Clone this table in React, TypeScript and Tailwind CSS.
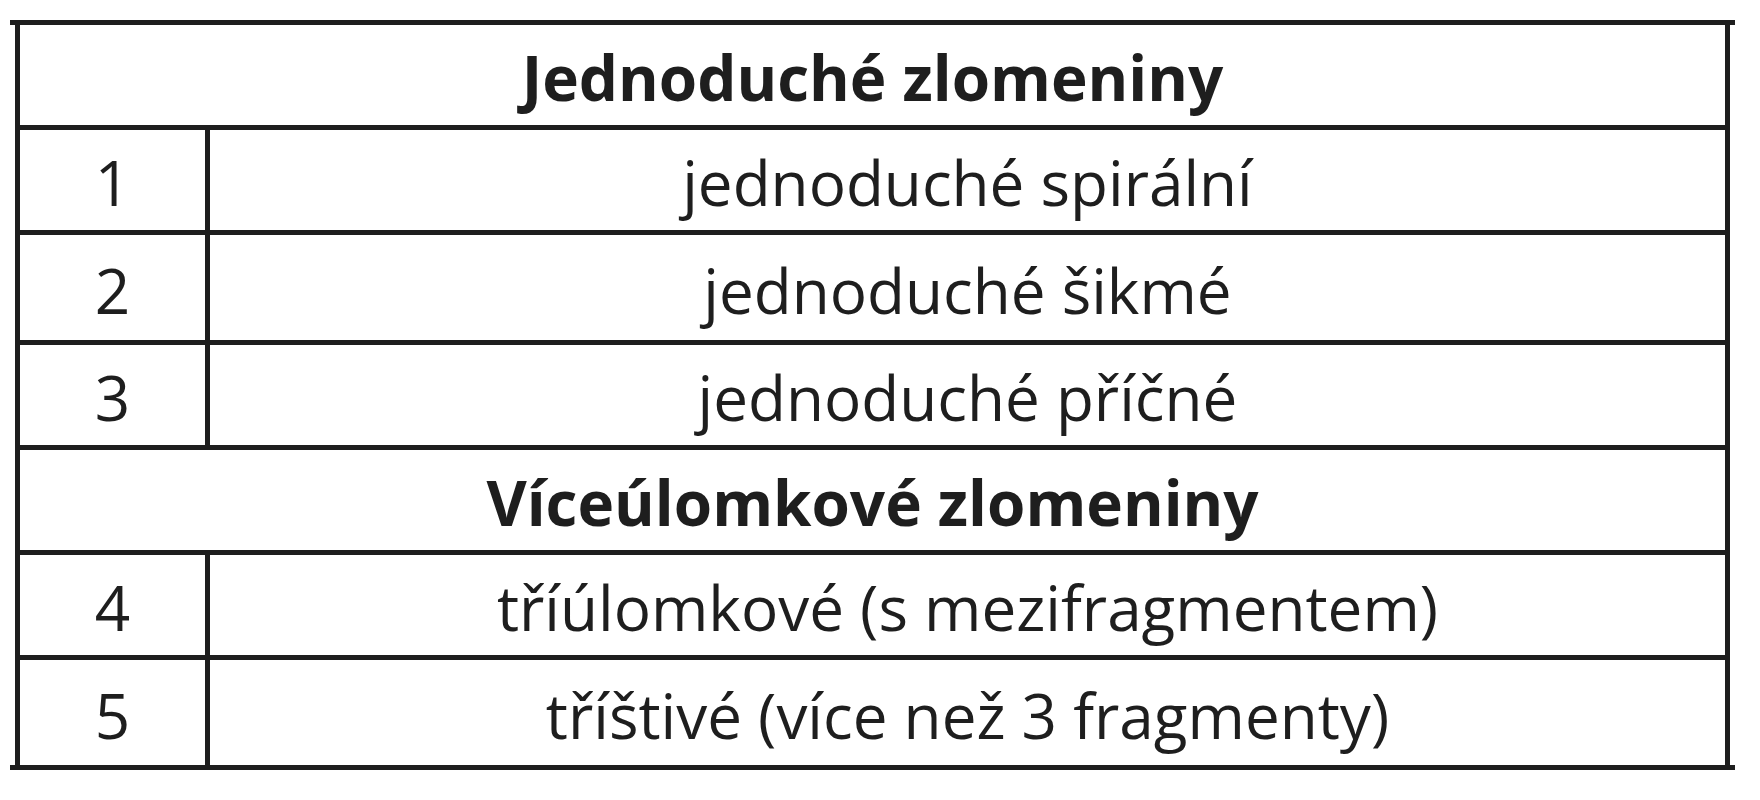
const rows: Array<{ type: "head"; label: string; h: string } | { type: "row"; num: string; label: string; h: string }> = [
  { type: "head", label: "Jednoduché zlomeniny", h: "h-[105px]" },
  { type: "row", num: "1", label: "jednoduché spirální", h: "h-[105px]" },
  { type: "row", num: "2", label: "jednoduché šikmé", h: "h-[110px]" },
  { type: "row", num: "3", label: "jednoduché příčné", h: "h-[105px]" },
  { type: "head", label: "Víceúlomkové zlomeniny", h: "h-[105px]" },
  { type: "row", num: "4", label: "tříúlomkové (s mezifragmentem)", h: "h-[105px]" },
  { type: "row", num: "5", label: "tříštivé (více než 3 fragmenty)", h: "h-[105px]" },
];

export default function App() {
  return (
    <div
      className="min-h-screen bg-white pt-[20px] pl-[10px] text-[#1e1e1e]"
      style={{ fontFamily: '"Open Sans", "Noto Sans", sans-serif' }}
    >
      <div className="w-[1725px]">
        <div className="h-[5px] bg-[#1e1e1e]" />
        <div className="mx-[5px] border-x-[5px] border-[#1e1e1e]">
          {rows.map((r, i) => (
            <div
              key={i}
              className={`flex ${r.h} ${i < rows.length - 1 ? "border-b-[5px] border-[#1e1e1e]" : ""}`}
            >
              {r.type === "head" ? (
                <div className="flex flex-1 items-center justify-center pt-[4px] text-[62px] font-bold leading-none">
                  {r.label}
                </div>
              ) : (
                <>
                  <div className="flex w-[190px] shrink-0 items-center justify-center border-r-[5px] border-[#1e1e1e] pt-[4px] text-[62px] leading-none">
                    {r.num}
                  </div>
                  <div className="flex flex-1 items-center justify-center pt-[4px] text-[62px] leading-none">
                    {r.label}
                  </div>
                </>
              )}
            </div>
          ))}
        </div>
        <div className="h-[5px] bg-[#1e1e1e]" />
      </div>
    </div>
  );
}
